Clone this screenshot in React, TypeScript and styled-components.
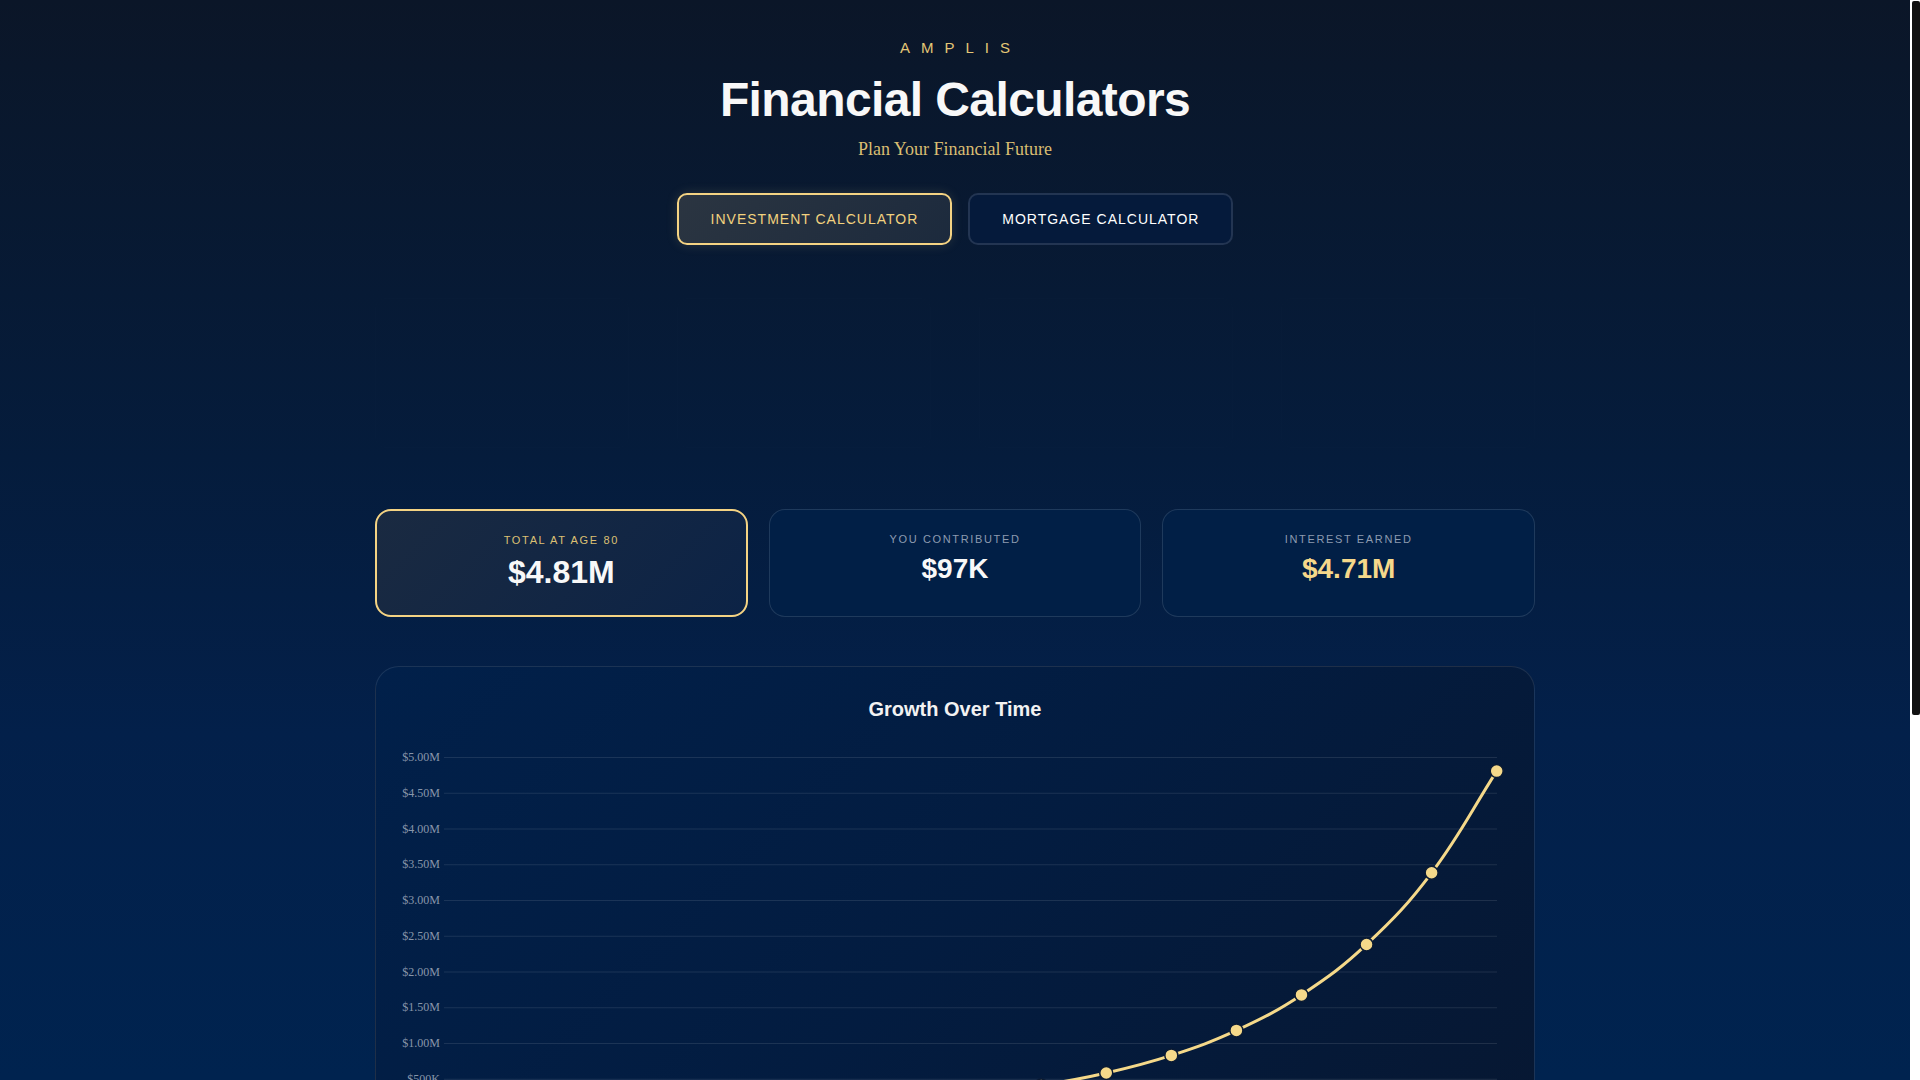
import React from 'react';
import styled, { createGlobalStyle } from 'styled-components';

const GlobalStyle = createGlobalStyle`
  html, body {
    margin: 0;
    padding: 0;
  }
  body {
    font-family: 'Liberation Sans', Arial, Helvetica, sans-serif;
    background: #0b1628;
    color: #ffffff;
  }
`;

// the reference shows a thin light scrollbar with a dark thumb at the right edge
const ScrollRail = styled.div`
  position: fixed;
  top: 0;
  right: 0;
  width: 10px;
  height: 100vh;
  background: #ffffff;
  z-index: 10;
`;

const ScrollThumb = styled.div`
  margin: 1px 0 0 2px;
  width: 8px;
  height: 714px;
  border-radius: 2px;
  background: #111111;
`;

const Page = styled.div`
  min-height: 100vh;
  padding: 39px 10px 448px 0;
  box-sizing: border-box;
  background: linear-gradient(
    180deg,
    #0b1628 0%,
    #09182e 8%,
    #051c3c 28%,
    #03204a 45%,
    #00234f 66%,
    #002658 100%
  );
`;

const Header = styled.header`
  display: flex;
  flex-direction: column;
  align-items: center;
  text-align: center;
`;

const Brand = styled.div`
  font-size: 15px;
  line-height: 18px;
  letter-spacing: 11px;
  padding-left: 11px;
  color: #e4c676;
`;

const Title = styled.h1`
  margin: 14px 0 0;
  font-size: 48px;
  line-height: 1.2;
  font-weight: 700;
  letter-spacing: -0.6px;
  color: #f8f8f8;
`;

const Subtitle = styled.p`
  margin: 8px 0 0;
  font-family: 'Liberation Serif', 'Times New Roman', serif;
  font-size: 18px;
  line-height: 24px;
  color: #d9bd72;
`;

const Tabs = styled.nav`
  display: flex;
  justify-content: center;
  gap: 16px;
  margin-top: 32px;
`;

const TabButton = styled.button<{ $active?: boolean }>`
  font-family: 'Liberation Sans', Arial, sans-serif;
  font-size: 14px;
  letter-spacing: 1px;
  text-transform: uppercase;
  padding: 16px 32px;
  border-radius: 10px;
  cursor: pointer;
  border: 2px solid ${(p) => (p.$active ? '#f4d383' : 'rgba(255, 255, 255, 0.12)')};
  color: ${(p) => (p.$active ? '#f2d27e' : '#ffffff')};
  background: ${(p) =>
    p.$active
      ? 'linear-gradient(135deg, #2b3541 0%, #1c2a3d 100%)'
      : '#051a3b'};
  box-shadow: ${(p) => (p.$active ? '0 0 12px rgba(244, 211, 131, 0.15)' : 'none')};
`;

const Container = styled.main`
  max-width: 1160px;
  margin: 0 auto;
`;

const GhostGrid = styled.section`
  display: grid;
  grid-template-columns: repeat(4, 1fr);
  gap: 48px;
  margin-top: 53px;
  height: 150px;
`;

const GhostField = styled.div`
  border-radius: 12px;
  border: 1px solid rgba(255, 255, 255, 0.008);
  background: rgba(255, 255, 255, 0.004);
`;

const StatsGrid = styled.section`
  display: grid;
  grid-template-columns: repeat(3, 1fr);
  gap: 21px;
  margin-top: 61px;
`;

const StatCard = styled.div<{ $highlight?: boolean }>`
  box-sizing: border-box;
  height: 108px;
  padding-top: 23px;
  text-align: center;
  border-radius: 16px;
  border: ${(p) => (p.$highlight ? '2px solid #f4d383' : '1px solid rgba(255, 255, 255, 0.12)')};
  background: ${(p) =>
    p.$highlight
      ? 'linear-gradient(135deg, #1a2a41 0%, #0c2346 100%)'
      : '#011f46'};
`;

const StatLabel = styled.div<{ $gold?: boolean }>`
  font-size: 11px;
  line-height: 13px;
  letter-spacing: 1.65px;
  text-transform: uppercase;
  color: ${(p) => (p.$gold ? '#dcc073' : '#8d9bb0')};
`;

const StatValue = styled.div<{ $size: number; $gold?: boolean }>`
  margin-top: 6px;
  font-size: ${(p) => p.$size}px;
  line-height: 1.2;
  font-weight: 700;
  color: ${(p) => (p.$gold ? '#f5d88a' : '#f8f8f8')};
`;

const ChartCard = styled.section`
  margin-top: 49px;
  padding: 31px 24px 32px;
  border-radius: 24px;
  border: 1px solid rgba(255, 255, 255, 0.1);
  background: linear-gradient(135deg, #01204a 0%, #031c40 50%, #071731 100%);
`;

const ChartTitle = styled.h2`
  margin: 0 0 24px;
  text-align: center;
  font-size: 20px;
  line-height: 22px;
  font-weight: 700;
  color: #f2f2f2;
`;

const ChartSvg = styled.svg`
  display: block;
  width: 100%;
  height: 405px;
  overflow: visible;
`;

type Pt = { x: number; y: number };

const GRID_LEFT = 44;
const GRID_RIGHT = 1097;
const PLOT_LEFT = 55.5;
const PLOT_RIGHT = 1096.7;
const Y_TOP = 13.5;
const PX_PER_M = 71.5;
const Y_ZERO = Y_TOP + 5 * PX_PER_M;

const ages = Array.from({ length: 17 }, (_, i) => 16 + i * 4);
const values = ages.map((_, i) => 4.81e6 * Math.pow(1.42, i - 16));

const yFor = (v: number) => Y_ZERO - (v / 1e6) * PX_PER_M;

const formatMoney = (v: number) => {
  if (v === 0) return '$0';
  if (v >= 1e6) return `$${(v / 1e6).toFixed(2)}M`;
  return `$${Math.round(v / 1e3)}K`;
};

function splinePath(pts: Pt[]) {
  const t = 0.4;
  const cps = pts.map((p, i) => {
    const prev = pts[i - 1] ?? p;
    const next = pts[i + 1] ?? p;
    const d01 = Math.hypot(p.x - prev.x, p.y - prev.y);
    const d12 = Math.hypot(next.x - p.x, next.y - p.y);
    const sum = d01 + d12 || 1;
    const fa = (t * d01) / sum;
    const fb = (t * d12) / sum;
    return {
      prev: { x: p.x - fa * (next.x - prev.x), y: p.y - fa * (next.y - prev.y) },
      next: { x: p.x + fb * (next.x - prev.x), y: p.y + fb * (next.y - prev.y) },
    };
  });
  let d = `M${pts[0].x},${pts[0].y}`;
  for (let i = 1; i < pts.length; i++) {
    const a = cps[i - 1].next;
    const b = cps[i].prev;
    d += ` C${a.x},${a.y} ${b.x},${b.y} ${pts[i].x},${pts[i].y}`;
  }
  return d;
}

const GrowthChart = () => {
  const step = (PLOT_RIGHT - PLOT_LEFT) / (values.length - 1);
  const pts = values.map((v, i) => ({ x: PLOT_LEFT + i * step, y: yFor(v) }));
  const ticks = Array.from({ length: 11 }, (_, i) => i * 5e5);

  return (
    <ChartSvg viewBox="0 0 1110 405" preserveAspectRatio="xMinYMin meet">
      {ticks.map((v) => (
        <g key={v}>
          <line
            x1={GRID_LEFT}
            x2={GRID_RIGHT}
            y1={yFor(v)}
            y2={yFor(v)}
            stroke="rgba(255,255,255,0.1)"
            strokeWidth={1}
          />
          <text
            x={40}
            y={yFor(v) + 3.5}
            textAnchor="end"
            fontFamily="'Liberation Serif', 'Times New Roman', serif"
            fontSize={12}
            fill="#8896aa"
          >
            {formatMoney(v)}
          </text>
        </g>
      ))}
      {ages.map((age, i) => (
        <text
          key={age}
          x={pts[i].x}
          y={Y_ZERO + 20}
          textAnchor="middle"
          fontFamily="'Liberation Serif', 'Times New Roman', serif"
          fontSize={12}
          fill="#8896aa"
        >
          {age}
        </text>
      ))}
      <path d={splinePath(pts)} fill="none" stroke="#f5d98a" strokeWidth={3} />
      {pts.map((p, i) => (
        <circle key={i} cx={p.x} cy={p.y} r={6.5} fill="#f5d98a" stroke="#0a1a33" strokeWidth={1.5} />
      ))}
    </ChartSvg>
  );
};

export default function App() {
  return (
    <>
      <GlobalStyle />
      <Page>
        <Header>
          <Brand>AMPLIS</Brand>
          <Title>Financial Calculators</Title>
          <Subtitle>Plan Your Financial Future</Subtitle>
          <Tabs>
            <TabButton $active>Investment Calculator</TabButton>
            <TabButton>Mortgage Calculator</TabButton>
          </Tabs>
        </Header>
        <Container>
          <GhostGrid aria-hidden>
            <GhostField />
            <GhostField />
            <GhostField />
            <GhostField />
          </GhostGrid>
          <StatsGrid>
            <StatCard $highlight>
              <StatLabel $gold>Total at Age 80</StatLabel>
              <StatValue $size={32}>$4.81M</StatValue>
            </StatCard>
            <StatCard>
              <StatLabel>You Contributed</StatLabel>
              <StatValue $size={28}>$97K</StatValue>
            </StatCard>
            <StatCard>
              <StatLabel>Interest Earned</StatLabel>
              <StatValue $size={28} $gold>
                $4.71M
              </StatValue>
            </StatCard>
          </StatsGrid>
          <ChartCard>
            <ChartTitle>Growth Over Time</ChartTitle>
            <GrowthChart />
          </ChartCard>
        </Container>
      </Page>
      <ScrollRail aria-hidden>
        <ScrollThumb />
      </ScrollRail>
    </>
  );
}
